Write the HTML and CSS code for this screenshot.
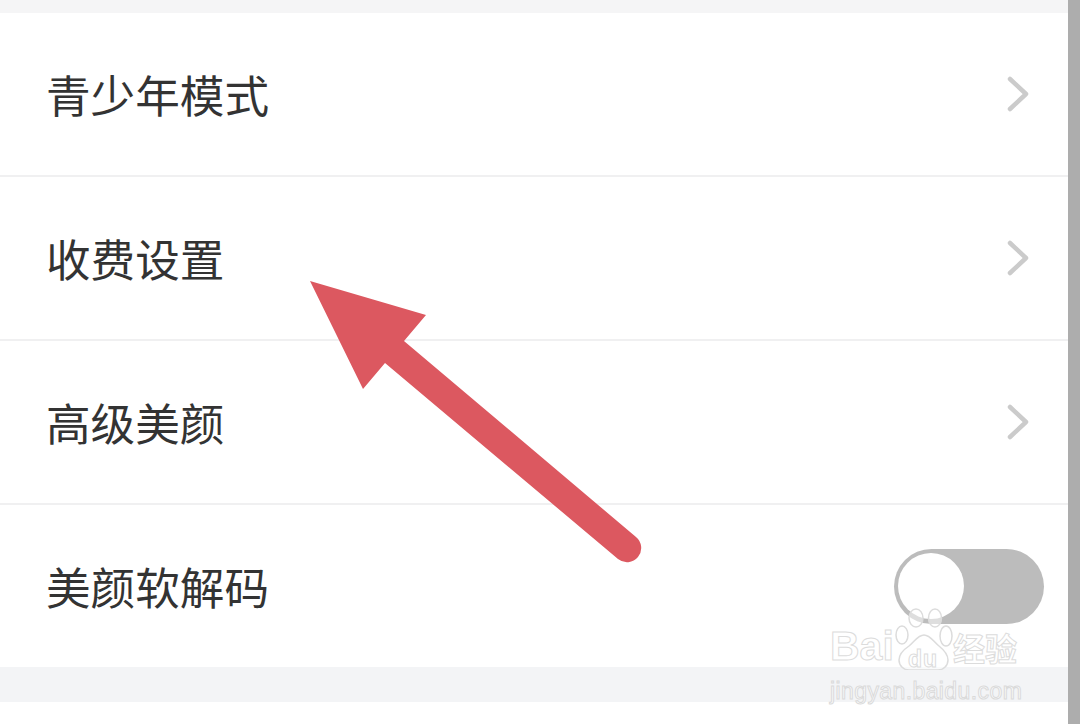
FILE: index.html
```html
<!DOCTYPE html>
<html lang="zh-CN">
<head>
    <meta charset="UTF-8">
    <title>设置</title>
    <link rel="stylesheet" href="styles.css">
</head>
<body>
    <div class="page">
        <div class="screen">
            <div class="band-top"></div>
            <ul class="list">
                <li class="row">
                    <span class="label">青少年模式</span>
                    <svg class="chevron" width="24" height="36" viewBox="0 0 24 36"><path d="M5 3 L21 18 L5 33"/></svg>
                </li>
                <li class="row">
                    <span class="label">收费设置</span>
                    <svg class="chevron" width="24" height="36" viewBox="0 0 24 36"><path d="M5 3 L21 18 L5 33"/></svg>
                </li>
                <li class="row">
                    <span class="label">高级美颜</span>
                    <svg class="chevron" width="24" height="36" viewBox="0 0 24 36"><path d="M5 3 L21 18 L5 33"/></svg>
                </li>
                <li class="row row-last">
                    <span class="label">美颜软解码</span>
                    <div class="switch"><span class="knob"></span></div>
                </li>
            </ul>
            <div class="band-bottom"></div>
        </div>
        <div class="scrollbar"></div>

        <!-- 箭头 -->
        <svg class="arrow" width="1080" height="724" viewBox="0 0 1080 724">
            <path d="M310 281 L426 315 L404 341 L636 537 A13 13 0 0 1 618 559 L385 363 L363 389 Z"/>
        </svg>

        <!-- 水印 -->
        <div class="watermark">
            <div class="mark-top">
                <span class="mark-bai">Bai</span>
                <div class="paw-box">
                    <svg class="paw" width="58" height="62" viewBox="0 0 58 62">
                        <ellipse cx="7" cy="27" rx="6" ry="9"/>
                        <ellipse cx="21" cy="10" rx="7" ry="9"/>
                        <ellipse cx="40" cy="10" rx="6.5" ry="9"/>
                        <ellipse cx="51" cy="28" rx="6" ry="10"/>
                        <path d="M29 27 C23 27 20 33 14 38 C8 42 4 46 4 52 C4 58 9 62 14 62 L43 62 C48 62 53 58 53 52 C53 46 49 42 44 38 C38 33 35 27 29 27 Z"/>
                    </svg>
                    <span class="mark-du">du</span>
                </div>
                <span class="mark-jy">经验</span>
            </div>
            <div class="mark-url">jingyan.baidu.com</div>
        </div>
    </div>
</body>
</html>
```

FILE: styles.css
```css
html,body,ul,li{
    margin: 0;padding: 0;
}
body{
    width: 1080px;height: 724px;overflow: hidden;background: #fff;
    font-family: "Liberation Sans", "Noto Sans CJK SC", sans-serif;
}
.page{
    display: flex;width: 1080px;height: 724px;position: relative;
}
.screen{
    flex: 1;display: flex;flex-direction: column;
}
.scrollbar{
    width: 12px;background: #adadad;
}
.band-top{
    height: 13px;background: #f5f5f6;
}
.list{
    list-style: none;
}
.row{
    height: 162px;border-bottom: 2px solid #f0f0f1;display: flex;align-items: center;justify-content: space-between;
    padding: 0 39px 0 46px;
}
.row-last{
    border-bottom: none;padding-right: 24px;
}
.label{
    font-family: "Noto Sans CJK SC", sans-serif;font-size: 44.6px;color: #333;line-height: 60px;
}
.chevron path{
    fill: none;stroke: #cbcbcb;stroke-width: 4.5;stroke-linecap: round;stroke-linejoin: round;
}
.switch{
    width: 150px;height: 75px;border-radius: 38px;background: #bcbcbc;display: flex;align-items: center;padding-left: 4px;box-sizing: border-box;
}
.knob{
    width: 66px;height: 66px;border-radius: 50%;background: #fff;
}
.band-bottom{
    height: 35px;background: #f3f4f6;
}
.arrow{
    position: absolute;left: 0;top: 0;
}
.arrow path{
    fill: #dc5860;
}
.watermark{
    position: absolute;left: 830px;top: 608px;width: 200px;
}
.mark-top{
    display: flex;align-items: flex-end;height: 62px;
}
.mark-bai,.mark-du,.mark-jy{
    font-weight: bold;color: rgba(255,255,255,0.7);-webkit-text-stroke: 1px #dcdcdc;
}
.mark-bai{
    width: 65px;font-size: 41px;line-height: 47px;
}
.paw-box{
    width: 58px;height: 62px;position: relative;
}
.paw ellipse,.paw path{
    fill: rgba(255,255,255,0.5);stroke: #dcdcdc;stroke-width: 1.5;
}
.mark-du{
    position: absolute;left: 13px;top: 39px;font-size: 23px;line-height: 24px;letter-spacing: 1px;
}
.mark-jy{
    font-family: "Noto Sans CJK SC", sans-serif;font-size: 32px;line-height: 46px;
}
.mark-url{
    font-size: 23px;line-height: 28px;color: rgba(255,255,255,0.7);-webkit-text-stroke: 1px #dadada;letter-spacing: 0.4px;margin-top: 7px;
}
```
